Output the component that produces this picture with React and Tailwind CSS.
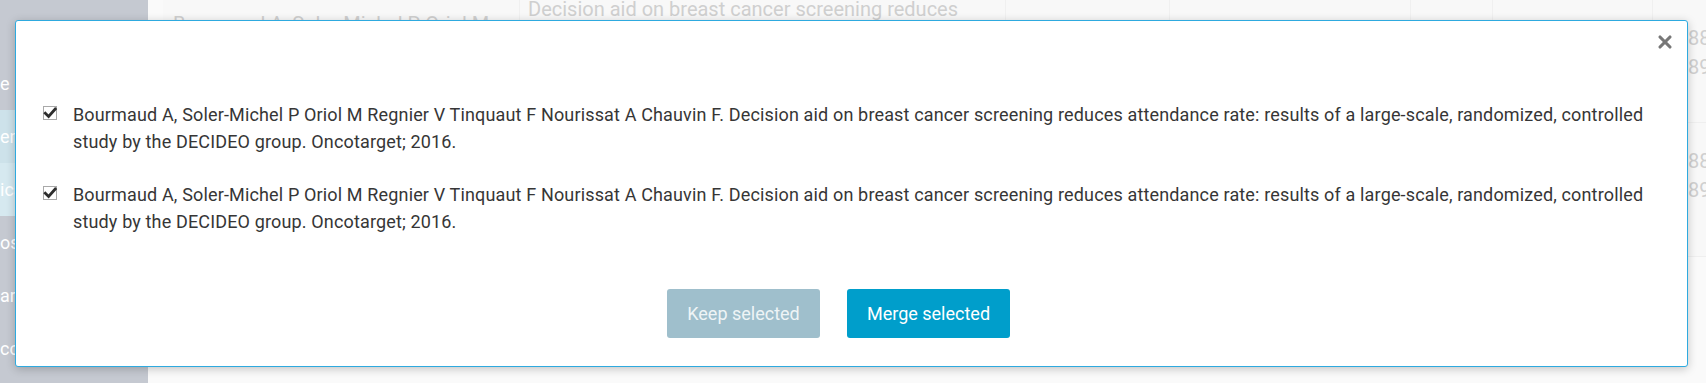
import { X } from 'lucide-react';

const citation =
  'Bourmaud A, Soler-Michel P Oriol M Regnier V Tinquaut F Nourissat A Chauvin F. Decision aid on breast cancer screening reduces attendance rate: results of a large-scale, randomized, controlled study by the DECIDEO group. Oncotarget; 2016.';

const navItems = [
  { label: 'e', tone: 'bg-[#c5c9d1]' },
  { label: 'en', tone: 'bg-[#cde2ea]' },
  { label: 'ica', tone: 'bg-[#d6e9f0]' },
  { label: 'os', tone: 'bg-[#c5c9d1]' },
  { label: 'ar', tone: 'bg-[#c5c9d1]' },
  { label: 'cc', tone: 'bg-[#c5c9d1]' },
];

function Checkbox() {
  return (
    <span className="mt-[5px] flex h-[14px] w-[14px] shrink-0 items-center justify-center border border-[#a9a9a9] bg-white">
      <svg viewBox="0 0 14 14" className="h-[14px] w-[14px] overflow-visible">
        <path d="M2.3 7.2 L5.6 10.4 L12.2 3" fill="none" stroke="#2d2d2d" strokeWidth="2.8" strokeLinecap="square" />
      </svg>
    </span>
  );
}

function BackgroundRow({ height, first }) {
  return (
    <div className="flex border-b border-[#efefef] bg-[#f8f8f8]" style={{ height }}>
      <div className="w-[357px] border-r border-[#f0f0f0] pl-[10px] pt-[12px] text-[20px] leading-[24px] text-[#cfcfcf]">
        {first ? 'Bourmaud A, Soler-Michel P Oriol M' : ''}
      </div>
      <div className="w-[486px] border-r border-[#f0f0f0] pl-[8px] text-[20px] leading-[18px] text-[#cfcfcf]">
        {first ? 'Decision aid on breast cancer screening reduces' : ''}
      </div>
      <div className="w-[164px] border-r border-[#f0f0f0]" />
      <div className="w-[241px] border-r border-[#f0f0f0]" />
      <div className="w-[82px] border-r border-[#f0f0f0]" />
      <div className="w-[160px] border-r border-[#f0f0f0]" />
      <div className="flex flex-1 flex-col pl-[35px] pt-[24px] text-[20px] leading-[29px] text-[#cfcfcf]">
        <span>88</span>
        <span>89</span>
      </div>
    </div>
  );
}

export default function App() {
  return (
    <div
      className="relative flex h-[383px] w-[1706px] overflow-hidden bg-[#fafafa]"
      style={{ fontFamily: 'Roboto, "Liberation Sans", sans-serif' }}
    >
      {/* page behind the dialog */}
      <aside className="flex w-[148px] shrink-0 flex-col bg-[#c5c9d1] pt-[57px]">
        {navItems.map((item) => (
          <div key={item.label} className={`flex h-[53px] items-center text-[18px] text-white ${item.tone}`}>
            {item.label}
          </div>
        ))}
      </aside>
      <main className="flex-1 pl-[15px]">
        <BackgroundRow height={123} first />
        <BackgroundRow height={134} />
      </main>

      {/* dialog */}
      <div className="absolute left-[15px] top-[20px] h-[347px] w-[1673px] rounded-[3px] border border-[#2eaadf] bg-white shadow-[0_2px_10px_rgba(0,0,0,0.22)]">
        <button className="absolute right-[12px] top-[11px] text-[#777777]">
          <X size={20} strokeWidth={3.8} />
        </button>

        <div className="flex flex-col gap-[26px] pl-[27px] pr-[30px] pt-[80px]">
          {[0, 1].map((i) => (
            <label key={i} className="flex items-start gap-[16px]">
              <Checkbox />
              <span className="text-[18px] leading-[27px] tracking-[0.15px] text-[#363636]">{citation}</span>
            </label>
          ))}
        </div>

        <div className="mt-[54px] flex justify-center gap-[27px] pr-[26px]">
          <button className="h-[49px] w-[153px] rounded-[3px] bg-[#9fbfcc] text-[18px] text-[#eef4f6]">
            Keep selected
          </button>
          <button className="h-[49px] w-[163px] rounded-[3px] bg-[#009ecb] text-[18px] text-white">
            Merge selected
          </button>
        </div>
      </div>
    </div>
  );
}
